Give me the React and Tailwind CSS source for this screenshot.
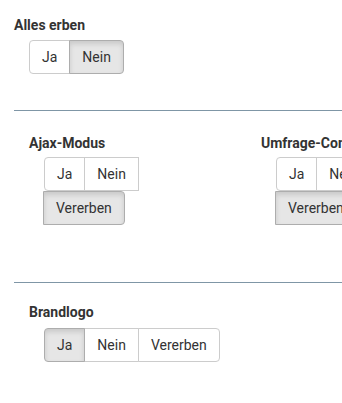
import React from 'react';

const font = { fontFamily: 'Roboto, "Liberation Sans", sans-serif' };

function Btn({ label, active, pos }) {
  const radius = {
    first: 'rounded-l-[4px]',
    middle: '',
    last: 'rounded-r-[4px] -ml-px',
    only: 'rounded-[4px]',
  }[pos];
  const look = active
    ? 'bg-[#e6e6e6] border-[#adadad] shadow-[inset_0_3px_5px_rgba(0,0,0,0.125)] z-10'
    : 'bg-white border-[#cccccc]';
  return (
    <div
      className={`relative h-[34px] px-[12px] flex items-center border text-[14px] text-[#333333] whitespace-nowrap ${radius} ${look} ${
        pos === 'middle' ? '-ml-px' : ''
      }`}
    >
      {label}
    </div>
  );
}

function Label({ children, className = '' }) {
  return (
    <div className={`h-[20px] leading-[20px] text-[14px] font-bold text-[#333333] whitespace-nowrap ${className}`}>
      {children}
    </div>
  );
}

function WrappedGroup({ active }) {
  return (
    <div className="ml-[15px] mt-[4px]">
      <div className="flex">
        <Btn label="Ja" pos="first" active={active === 'ja'} />
        <Btn label="Nein" pos="middle" active={active === 'nein'} />
      </div>
      <div className="flex">
        <Btn label="Vererben" pos="last" active={active === 'inherit'} />
      </div>
    </div>
  );
}

export default function App() {
  return (
    <div className="w-[342px] h-[403px] overflow-hidden bg-white" style={font}>
      <div className="pl-[14px]">
        {/* Alles erben */}
        <Label className="pt-0 mt-[15px]">Alles erben</Label>
        <div className="flex ml-[15px] mt-[5px]">
          <Btn label="Ja" pos="first" />
          <Btn label="Nein" pos="last" active />
        </div>

        <div className="mt-[36px] h-px bg-[#7f96a6] w-[400px]" />

        {/* Two column row */}
        <div className="grid grid-cols-[232px_232px] pl-[15px] mt-[22px]">
          <div>
            <Label>Ajax-Modus</Label>
            <WrappedGroup active="inherit" />
          </div>
          <div>
            <Label>Umfrage-Container</Label>
            <WrappedGroup active="inherit" />
          </div>
        </div>

        <div className="mt-[57px] h-px bg-[#7f96a6] w-[400px]" />

        {/* Brandlogo */}
        <div className="pl-[15px] mt-[19px]">
          <Label>Brandlogo</Label>
          <div className="flex ml-[15px] mt-[6px]">
            <Btn label="Ja" pos="first" active />
            <Btn label="Nein" pos="middle" />
            <Btn label="Vererben" pos="last" />
          </div>
        </div>
      </div>
    </div>
  );
}
